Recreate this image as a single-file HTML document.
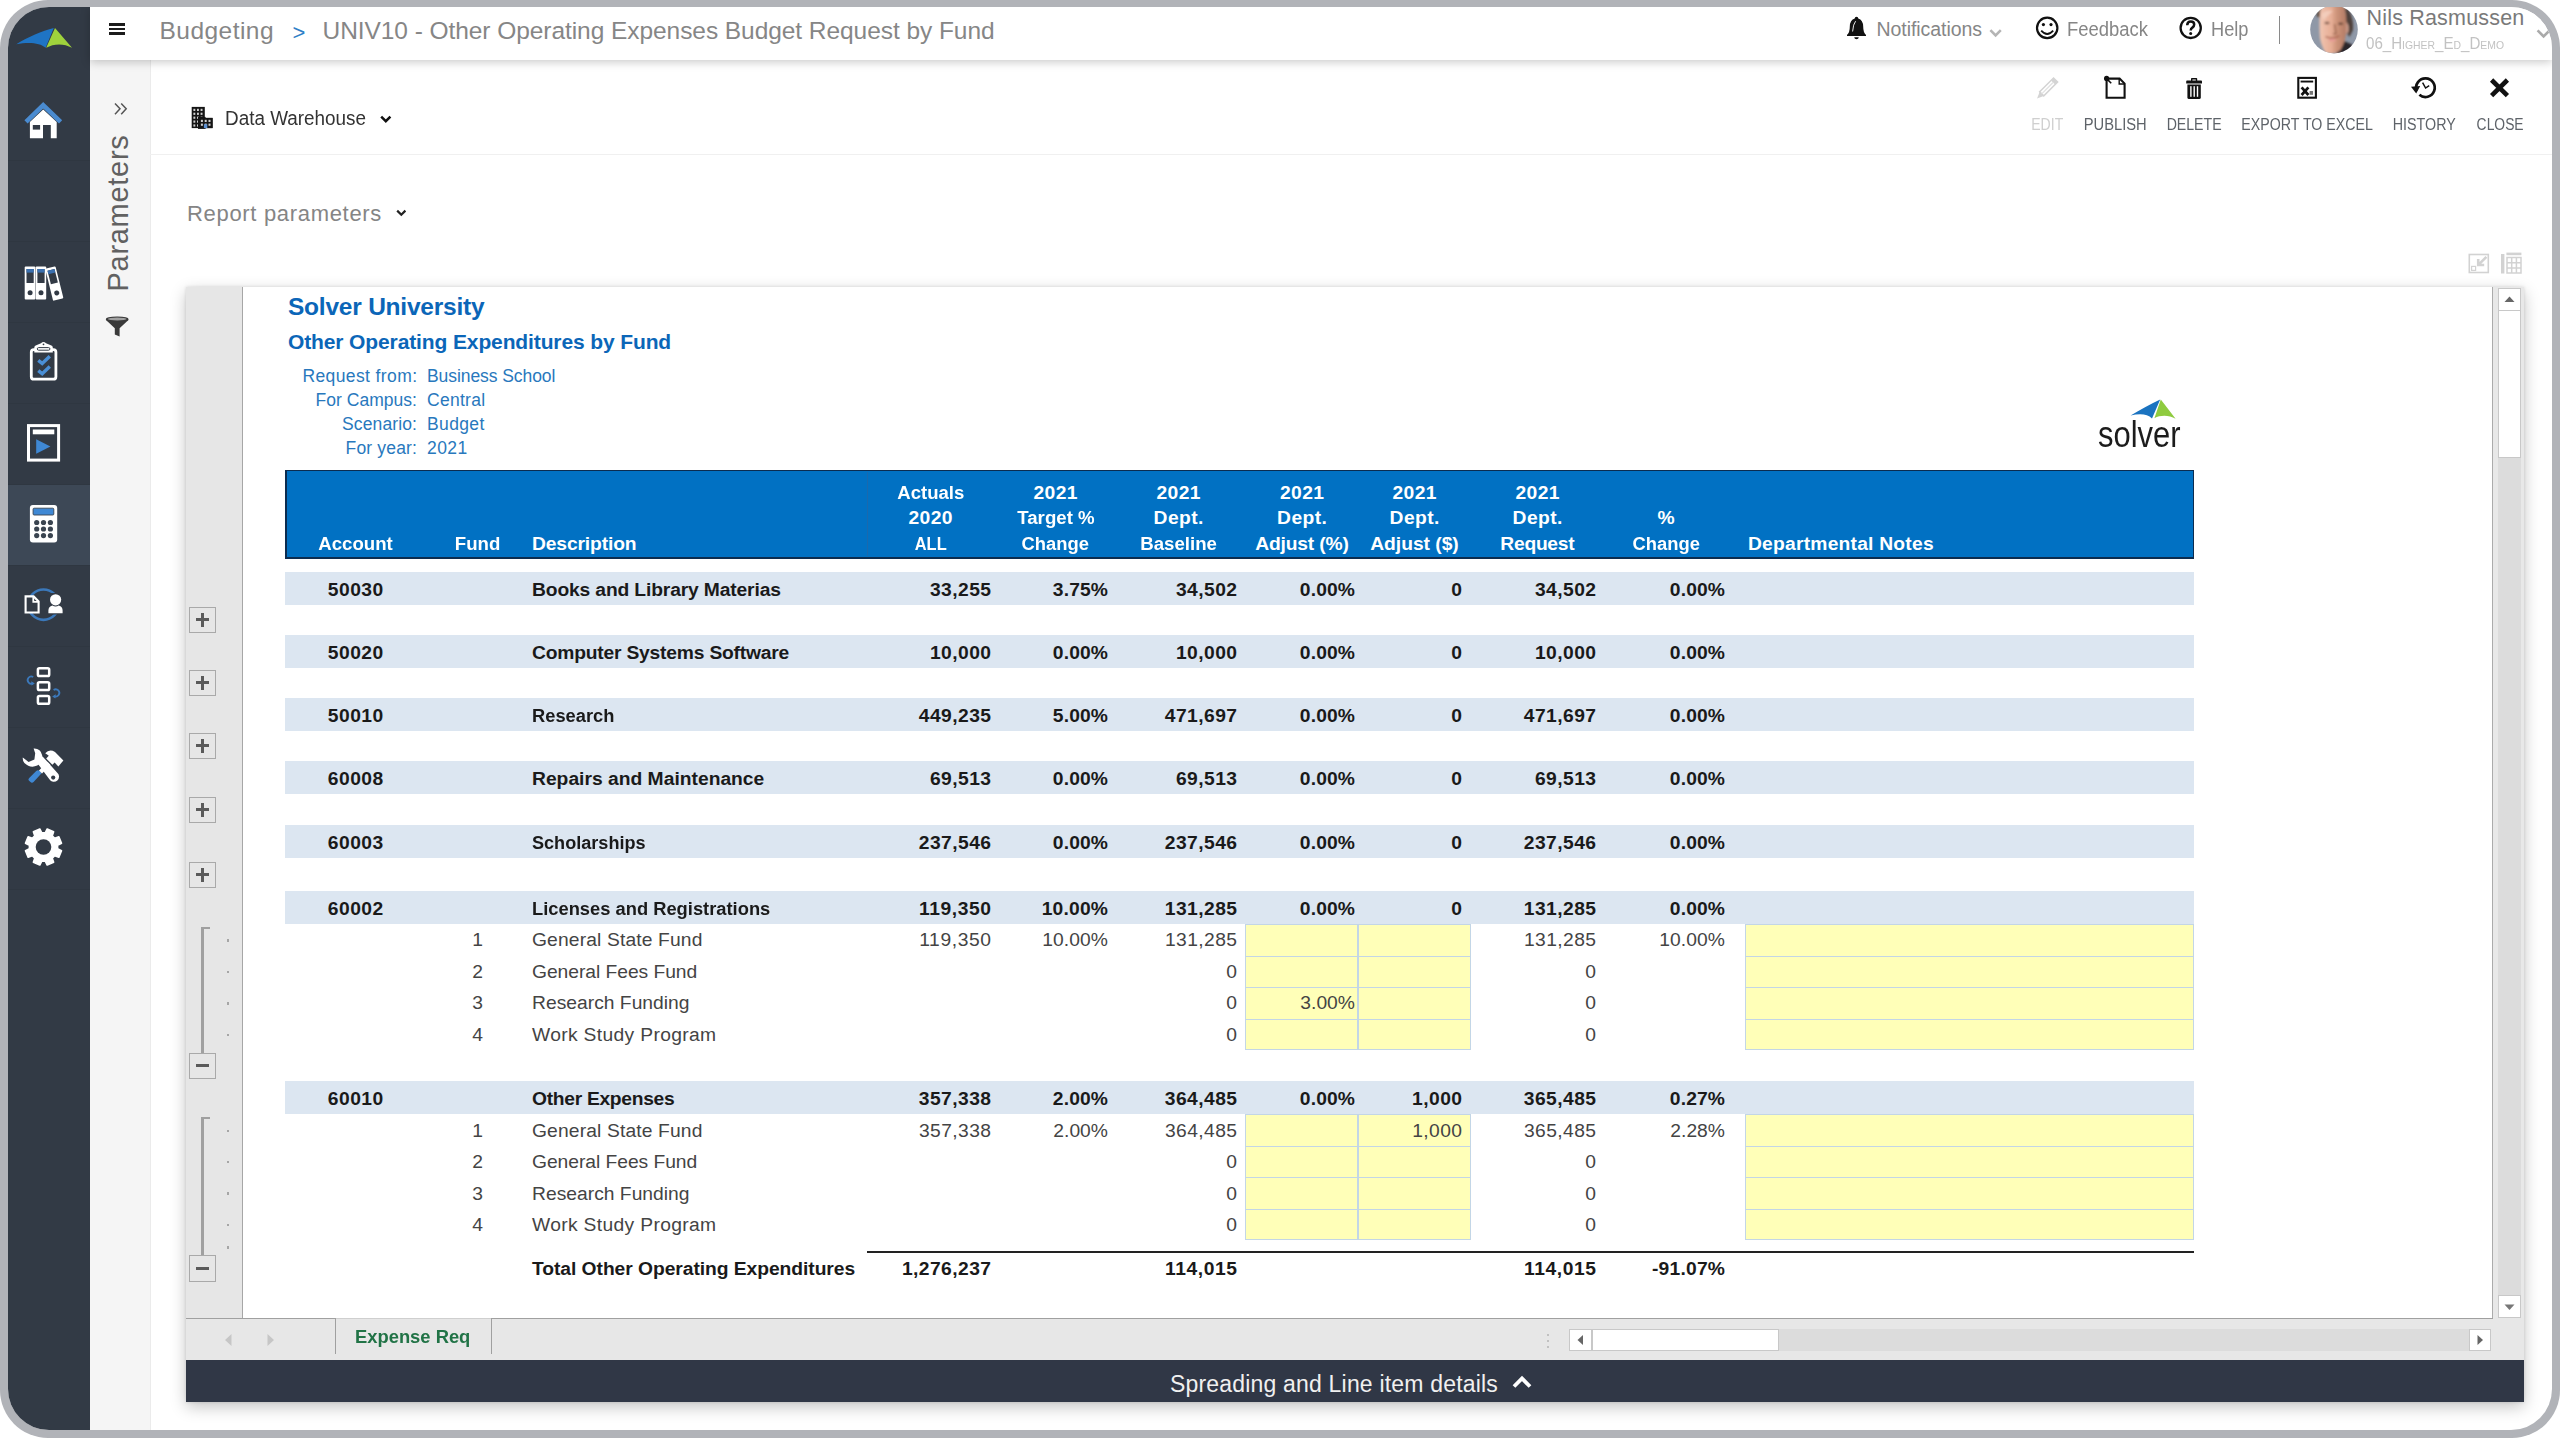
<!DOCTYPE html>
<html lang="en"><head><meta charset="utf-8"><title>UNIV10 - Other Operating Expenses Budget Request by Fund</title>
<style>
html,body{margin:0;padding:0;background:#fff;}
body{width:2560px;height:1438px;overflow:hidden;position:relative;font-family:"Liberation Sans",sans-serif;}
#frame{position:absolute;left:0;top:0;width:2560px;height:1438px;border-radius:48px;background:#b1b3b8;overflow:hidden;}
#app{position:absolute;left:7.5px;top:7px;width:2544.5px;height:1423px;border-radius:41px;background:#fff;overflow:hidden;}
/* everything inside #app is positioned in page coordinates via this shift */
#pg{position:absolute;left:-7.5px;top:-7px;width:2560px;height:1438px;}
.t{position:absolute;white-space:nowrap;font-family:"Liberation Sans",sans-serif;}
.b{position:absolute;}
svg{position:absolute;overflow:visible;}

</style></head><body>
<div id="frame"><div id="app"><div id="pg">
<div class="b" style="left:90px;top:60px;width:60px;height:1371px;background:#f5f5f5;border-right:1px solid #ebebeb;"></div>
<div class="b" style="left:150px;top:154px;width:2402px;height:1px;background:#f0f0f0;"></div>
<div class="b" style="left:7px;top:7px;width:83px;height:1424px;background:#323a45;"></div>
<div class="b" style="left:7px;top:484px;width:83px;height:81px;background:#3d4856;"></div>
<div class="b" style="left:8px;top:160px;width:82px;height:1px;background:#2f3741;"></div>
<div class="b" style="left:8px;top:241px;width:82px;height:1px;background:#2f3741;"></div>
<div class="b" style="left:8px;top:322px;width:82px;height:1px;background:#2f3741;"></div>
<div class="b" style="left:8px;top:403px;width:82px;height:1px;background:#2f3741;"></div>
<div class="b" style="left:8px;top:484px;width:82px;height:1px;background:#2f3741;"></div>
<div class="b" style="left:8px;top:565px;width:82px;height:1px;background:#2f3741;"></div>
<div class="b" style="left:8px;top:646px;width:82px;height:1px;background:#2f3741;"></div>
<div class="b" style="left:8px;top:727px;width:82px;height:1px;background:#2f3741;"></div>
<div class="b" style="left:8px;top:808px;width:82px;height:1px;background:#2f3741;"></div>
<div class="b" style="left:8px;top:889px;width:82px;height:1px;background:#2f3741;"></div>
<svg style="left:0;top:0" width="100" height="900" viewBox="0 0 100 900"><path d="M16.3 44.3 C28 37 42 31 53.8 28 L45.6 47.8 C40 42.5 28 42 16.3 44.3Z" fill="#1f74c4"/><path d="M55 28 L72 47.8 C64 43.3 54 43.3 46.2 47.8Z" fill="#9fd23c"/><path d="M29.9 122 L43.2 109.5 L56.7 122 V138.2 H50.8 V125 H43 V138.2 H29.9Z" fill="#fff"/><rect x="32.8" y="125" width="7.3" height="4.6" fill="#323a45"/><path d="M26 121.8 L43.2 105.3 L60.6 121.8" fill="none" stroke="#4a8bd0" stroke-width="4.6" stroke-linejoin="miter"/><g ><rect x="24.7" y="266.6" width="10.6" height="33" rx="1" fill="#fff"/><rect x="26.5" y="269" width="7.2" height="14" fill="#323a45"/><rect x="26.5" y="269" width="7.2" height="3.6" fill="#3a6fae"/><circle cx="30.1" cy="292.8" r="2.5" fill="#323a45"/></g><g ><rect x="35.6" y="266.6" width="10.6" height="33" rx="1" fill="#fff"/><rect x="37.4" y="269" width="7.2" height="14" fill="#323a45"/><rect x="37.4" y="269" width="7.2" height="3.6" fill="#3a6fae"/><circle cx="41.0" cy="292.8" r="2.5" fill="#323a45"/></g><g transform="rotate(-14 58.2 299.6) translate(5.4 0)"><rect x="47.6" y="266.6" width="10.6" height="33" rx="1" fill="#fff"/><rect x="49.4" y="269" width="7.2" height="14" fill="#323a45"/><rect x="49.4" y="269" width="7.2" height="3.6" fill="#3a6fae"/><circle cx="53.0" cy="292.8" r="2.5" fill="#323a45"/></g><rect x="31.3" y="349.6" width="24.6" height="29.6" rx="2.5" fill="none" stroke="#fff" stroke-width="2.8"/><path d="M34.3 352.4 V347.5 Q34.3 345.5 36.3 345.3 L41 343.3 Q43.5 340.8 46 343.3 L50.8 345.3 Q52.8 345.5 52.8 347.5 V352.4Z" fill="#fff"/><rect x="37.3" y="347.6" width="12.6" height="2.6" rx="1.3" fill="none" stroke="#323a45" stroke-width="1"/><circle cx="43.5" cy="344.3" r="0.9" fill="#323a45"/><path d="M38.3 360.3 L42.2 363.4 L49.8 356.2" fill="none" stroke="#4a8fd6" stroke-width="3.4"/><path d="M38.3 370.6 L42.2 373.7 L49.8 366.5" fill="none" stroke="#4a8fd6" stroke-width="3.4"/><rect x="28.5" y="425.6" width="30.1" height="34.5" fill="none" stroke="#fff" stroke-width="3"/><rect x="32.8" y="429.5" width="21.5" height="4.8" fill="#fff"/><path d="M36.2 439.2 V453.8 L50.4 446.5Z" fill="#3f88d4"/><rect x="29.9" y="505" width="27.3" height="37.4" rx="3" fill="#fff"/><rect x="33.1" y="508.2" width="20.7" height="6.8" rx="1" fill="#3f88d4" stroke="#3a4450" stroke-width="0.9"/><circle cx="36.7" cy="522.5" r="2.6" fill="#3a4450"/><circle cx="36.7" cy="529" r="2.6" fill="#3a4450"/><circle cx="36.7" cy="535.6" r="2.6" fill="#3a4450"/><circle cx="43.5" cy="522.5" r="2.6" fill="#3a4450"/><circle cx="43.5" cy="529" r="2.6" fill="#3a4450"/><circle cx="43.5" cy="535.6" r="2.6" fill="#3a4450"/><circle cx="50.4" cy="522.5" r="2.6" fill="#3a4450"/><circle cx="50.4" cy="529" r="2.6" fill="#3a4450"/><circle cx="50.4" cy="535.6" r="2.6" fill="#3a4450"/><circle cx="43.5" cy="604.7" r="15.2" fill="none" stroke="#3b78ba" stroke-width="2.6"/><path d="M25.6 596.4 H33.6 L38.6 601.4 V612.5 H25.6Z" fill="#323a45" stroke="#fff" stroke-width="2.1"/><path d="M33.3 596.4 V601.8 H38.6" fill="none" stroke="#fff" stroke-width="1.8"/><rect x="46" y="593" width="18" height="21.5" fill="#323a45"/><circle cx="55.6" cy="599.8" r="5.6" fill="#fff"/><path d="M48.4 613.2 V610.5 Q48.4 606.6 52.4 605.6 Q55.6 607.6 58.8 605.6 Q62.6 606.6 62.6 610.5 V613.2Z" fill="#fff"/><rect x="37.9" y="668.2" width="11.3" height="7.8" rx="1.6" fill="none" stroke="#fff" stroke-width="2.5"/><rect x="37.9" y="682.2" width="11.3" height="7.8" rx="1.6" fill="none" stroke="#fff" stroke-width="2.5"/><rect x="37.9" y="696" width="11.3" height="7.8" rx="1.6" fill="none" stroke="#fff" stroke-width="2.5"/><path d="M33.2 677 A3.6 3.6 0 1 0 33.4 683" fill="none" stroke="#3b78ba" stroke-width="1.8"/><path d="M31.2 681.2 L34.8 683.6 L31.6 685.6Z" fill="#3b78ba"/><path d="M53.6 690 A3.6 3.6 0 1 1 53.8 696" fill="none" stroke="#3b78ba" stroke-width="1.8"/><path d="M55.8 694.2 L52.2 696.6 L55.4 698.6Z" fill="#3b78ba"/><path d="M29.2 778 L36.2 771 Q38 769.6 39.6 771 L41.6 773.2 L33.8 781.8 Q32 783.6 30.2 781.8 L28.8 780.4 Q27.8 779.2 29.2 778Z" fill="#3f88d4"/><path d="M45.2 753.2 Q49.5 748.6 55 752 L63.4 760.4 L58.4 766.4 L54.6 762.4 L52.4 764.8 L46.2 758.6 L48.8 755.8 Q47.2 754.2 45.2 753.2Z" fill="#fff"/><path d="M47.4 761.8 L50.4 764.8 L42 773.4 L39 770.4Z" fill="#fff"/><path d="M36.2 761.6 L42.6 756.4 L57 772.4 A5.2 5.2 0 1 1 49.4 779.2Z" fill="#fff"/><circle cx="53.2" cy="777.6" r="2.1" fill="#323a45"/><path d="M33.6 748.6 Q40.6 748.2 42.2 755.4 Q43.4 762.6 37.2 765.6 Q30.2 768.6 24.4 763 Q22.4 760.6 22.8 757.6 L28.6 762 L34.4 759.4 L35.2 753.2Z" fill="#fff"/><path d="M45.24 832.91 L47.20 828.98 L53.63 831.64 L52.24 835.81 L54.69 838.26 L58.86 836.87 L61.52 843.30 L57.59 845.26 L57.59 848.74 L61.52 850.70 L58.86 857.13 L54.69 855.74 L52.24 858.19 L53.63 862.36 L47.20 865.02 L45.24 861.09 L41.76 861.09 L39.80 865.02 L33.37 862.36 L34.76 858.19 L32.31 855.74 L28.14 857.13 L25.48 850.70 L29.41 848.74 L29.41 845.26 L25.48 843.30 L28.14 836.87 L32.31 838.26 L34.76 835.81 L33.37 831.64 L39.80 828.98 L41.76 832.91Z" fill="#fff" stroke="#fff" stroke-width="1.6" stroke-linejoin="round"/><circle cx="43.5" cy="847.0" r="7.8" fill="#323a45"/></svg>
<div class="t" style="font-size:29px;color:#616161;letter-spacing:0.711px;left:0.00px;top:-19.00px;line-height:38px;left:118px;top:213px;transform:translate(-50%,-50%) rotate(-90deg);">Parameters</div>
<svg style="left:0;top:0" width="2560" height="400" viewBox="0 0 2560 400"><path d="M115 103.4 L120 108.8 L115 114.2 M121.2 103.4 L126.2 108.8 L121.2 114.2" fill="none" stroke="#555" stroke-width="1.5"/><path d="M105.8 319.2 Q105.8 316.4 117.2 316.4 Q128.6 316.4 128.6 319.2 Q128.6 320.6 126.8 321.6 L119.6 328.2 V336.4 L114.8 334.6 V328.2 L107.6 321.6 Q105.8 320.6 105.8 319.2Z" fill="#3a3a3a"/><ellipse cx="117.2" cy="319" rx="9.4" ry="1.5" fill="#f5f5f5" opacity=".55"/><rect x="191.7" y="106.9" width="13.1" height="21.2" fill="#151515"/><rect x="199" y="117.9" width="13.6" height="10.2" fill="#151515"/><rect x="193.4" y="108.8" width="1.9" height="2.2" fill="#cfcfcf"/><rect x="197.0" y="108.8" width="1.9" height="2.2" fill="#cfcfcf"/><rect x="200.6" y="108.8" width="1.9" height="2.2" fill="#cfcfcf"/><rect x="193.4" y="112.7" width="1.9" height="2.2" fill="#cfcfcf"/><rect x="197.0" y="112.7" width="1.9" height="2.2" fill="#cfcfcf"/><rect x="200.6" y="112.7" width="1.9" height="2.2" fill="#cfcfcf"/><rect x="193.4" y="116.6" width="1.9" height="2.2" fill="#cfcfcf"/><rect x="197.0" y="116.6" width="1.9" height="2.2" fill="#cfcfcf"/><rect x="200.6" y="116.6" width="1.9" height="2.2" fill="#cfcfcf"/><rect x="193.4" y="120.5" width="1.9" height="2.2" fill="#cfcfcf"/><rect x="197.0" y="120.5" width="1.9" height="2.2" fill="#cfcfcf"/><rect x="200.6" y="120.5" width="1.9" height="2.2" fill="#cfcfcf"/><rect x="193.4" y="124.4" width="1.9" height="2.2" fill="#cfcfcf"/><rect x="197.0" y="124.4" width="1.9" height="2.2" fill="#cfcfcf"/><rect x="200.6" y="124.4" width="1.9" height="2.2" fill="#cfcfcf"/><rect x="198" y="116.9" width="7.6" height="12" fill="#151515"/><rect x="199" y="117.9" width="13.6" height="10.2" fill="#151515"/><rect x="200.9" y="119.8" width="2" height="2.2" fill="#cfcfcf"/><rect x="204.7" y="119.8" width="2" height="2.2" fill="#cfcfcf"/><rect x="208.5" y="119.8" width="2" height="2.2" fill="#cfcfcf"/><rect x="200.9" y="123.6" width="2" height="2.2" fill="#cfcfcf"/><rect x="204.7" y="123.6" width="2" height="2.2" fill="#cfcfcf"/><rect x="208.5" y="123.6" width="2" height="2.2" fill="#cfcfcf"/><rect x="203.9" y="124.2" width="3.4" height="3.9" fill="#5b8fd0"/><path d="M381.2 116.6 L385.8 121.2 L390.4 116.6" fill="none" stroke="#111" stroke-width="2.5"/><path d="M397.2 210.6 L401.3 214.7 L405.4 210.6" fill="none" stroke="#222" stroke-width="2.2"/><rect x="2469.3" y="254.5" width="19" height="18" fill="none" stroke="#d2d2d2" stroke-width="1.6"/><rect x="2471.6" y="266.4" width="4" height="4" fill="none" stroke="#d2d2d2" stroke-width="1.2"/><path d="M2478.6 264.6 L2486.4 256.8 M2478.2 259 V265 H2484.2" fill="none" stroke="#d2d2d2" stroke-width="2.6"/><rect x="2501" y="254" width="3.4" height="19.5" fill="#d2d2d2"/><rect x="2506.4" y="252.6" width="15" height="2.6" fill="#d2d2d2"/><path d="M2507 257.6 H2521 V273 H2507Z M2507 262.8 H2521 M2507 267.9 H2521 M2511.7 257.6 V273 M2516.4 257.6 V273" fill="none" stroke="#d2d2d2" stroke-width="1.5"/></svg>
<div class="t" style="font-size:19.5px;color:#333;transform:scaleX(0.9683);transform-origin:left center;left:225.00px;top:105.50px;line-height:25px;">Data Warehouse</div>
<div class="t" style="font-size:22px;color:#858585;letter-spacing:0.681px;left:187.00px;top:198.50px;line-height:29px;">Report parameters</div>
<div class="t" style="font-size:16px;color:#cfcfcf;transform:scaleX(0.8778);transform-origin:center center;left:2029.27px;top:113.50px;line-height:21px;">EDIT</div>
<div class="t" style="font-size:16px;color:#5e6369;transform:scaleX(0.9201);transform-origin:center center;left:2080.77px;top:113.50px;line-height:21px;">PUBLISH</div>
<div class="t" style="font-size:16px;color:#5e6369;transform:scaleX(0.8835);transform-origin:center center;left:2163.38px;top:113.50px;line-height:21px;">DELETE</div>
<div class="t" style="font-size:16px;color:#5e6369;transform:scaleX(0.8872);transform-origin:center center;left:2232.89px;top:113.50px;line-height:21px;">EXPORT TO EXCEL</div>
<div class="t" style="font-size:16px;color:#5e6369;transform:scaleX(0.8930);transform-origin:center center;left:2389.23px;top:113.50px;line-height:21px;">HISTORY</div>
<div class="t" style="font-size:16px;color:#5e6369;transform:scaleX(0.8664);transform-origin:center center;left:2472.88px;top:113.50px;line-height:21px;">CLOSE</div>
<div class="b" style="left:186px;top:287px;width:2338px;height:1115px;background:#fff;box-shadow:0 5px 15px rgba(0,0,0,.23),0 0 3px rgba(0,0,0,.12);"></div>
<div class="b" style="left:186px;top:287px;width:56px;height:1032px;background:#e6e6e6;border-right:1px solid #a6a6a6;"></div>
<div class="b" style="left:2492px;top:287px;width:32px;height:1032px;background:#e8e8e8;border-left:1px solid #ababab;box-sizing:border-box;"></div>
<div class="b" style="left:2498px;top:311px;width:23px;height:985px;background:#dcdcdc;"></div>
<div class="b" style="left:2498px;top:288px;width:23px;height:23px;background:#fff;box-sizing:border-box;border:1px solid #c8c8c8;"></div>
<div class="b" style="left:2498px;top:310px;width:23px;height:148px;background:#fff;box-sizing:border-box;border:1px solid #c8c8c8;"></div>
<div class="b" style="left:2498px;top:1295px;width:23px;height:23px;background:#fff;box-sizing:border-box;border:1px solid #c8c8c8;"></div>
<svg style="left:2498px;top:288px" width="23" height="23"><path d="M6.5 14 L11.5 8.5 L16.5 14Z" fill="#666"/></svg>
<svg style="left:2498px;top:1295px" width="23" height="23"><path d="M6.5 9.5 L11.5 15 L16.5 9.5Z" fill="#777"/></svg>
<div class="b" style="left:186px;top:1318px;width:2338px;height:42px;background:#e7e7e7;"></div>
<div class="b" style="left:186px;top:1318px;width:150px;height:1px;background:#a0a0a0;"></div>
<div class="b" style="left:491px;top:1318px;width:2002px;height:1px;background:#a0a0a0;"></div>
<div class="b" style="left:335px;top:1318px;width:156px;height:1px;background:#cfcfcf;"></div>
<div class="b" style="left:335px;top:1318px;width:1px;height:36px;background:#a0a0a0;"></div>
<div class="b" style="left:491px;top:1318px;width:1px;height:36px;background:#a0a0a0;"></div>
<svg style="left:224px;top:1332px" width="60" height="16"><path d="M7.5 2 L1 8 L7.5 14Z M43.5 2 L50 8 L43.5 14Z" fill="#c6c6c6"/></svg>
<div class="t" style="font-size:19.25px;color:#217346;font-weight:bold;transform:scaleX(0.9539);transform-origin:left center;left:355.00px;top:1324.00px;line-height:25px;">Expense Req</div>
<div class="b" style="left:1569px;top:1329px;width:922px;height:22px;background:#dcdcdc;"></div>
<div class="b" style="left:1569px;top:1329px;width:23px;height:22px;background:#fff;box-sizing:border-box;border:1px solid #c8c8c8;"></div>
<div class="b" style="left:1592px;top:1329px;width:187px;height:22px;background:#fff;box-sizing:border-box;border:1px solid #c8c8c8;"></div>
<div class="b" style="left:2469px;top:1329px;width:22px;height:22px;background:#fff;box-sizing:border-box;border:1px solid #c8c8c8;"></div>
<svg style="left:1569px;top:1329px" width="23" height="22"><path d="M14 6 L8.5 11 L14 16Z" fill="#666"/></svg>
<svg style="left:2469px;top:1329px" width="22" height="22"><path d="M8.5 6 L14 11 L8.5 16Z" fill="#666"/></svg>
<div class="b" style="left:1546.8px;top:1333.7px;width:2.6px;height:2.6px;background:#b4b4b4;border-radius:1.3px;"></div>
<div class="b" style="left:1546.8px;top:1339.7px;width:2.6px;height:2.6px;background:#b4b4b4;border-radius:1.3px;"></div>
<div class="b" style="left:1546.8px;top:1345.7px;width:2.6px;height:2.6px;background:#b4b4b4;border-radius:1.3px;"></div>
<div class="b" style="left:186px;top:1360px;width:2338px;height:42px;background:#303746;"></div>
<div class="t" style="font-size:23px;color:#f0f0f0;letter-spacing:0.186px;left:1170.00px;top:1368.60px;line-height:30px;">Spreading and Line item details</div>
<svg style="left:1512px;top:1374px" width="20" height="14"><path d="M2 12.5 L10 4.5 L18 12.5" fill="none" stroke="#fff" stroke-width="3.8"/></svg>
<div class="b" style="left:189px;top:606.6px;width:26.8px;height:26.8px;background:#e6e6e6;box-sizing:border-box;border:1.5px solid #a9a9a9;"></div>
<div class="b" style="left:195.6px;top:618.4px;width:13.6px;height:3px;background:#5a5a5a;"></div>
<div class="b" style="left:200.9px;top:613.1px;width:3px;height:13.6px;background:#5a5a5a;"></div>
<div class="b" style="left:189px;top:669.6px;width:26.8px;height:26.8px;background:#e6e6e6;box-sizing:border-box;border:1.5px solid #a9a9a9;"></div>
<div class="b" style="left:195.6px;top:681.4px;width:13.6px;height:3px;background:#5a5a5a;"></div>
<div class="b" style="left:200.9px;top:676.1px;width:3px;height:13.6px;background:#5a5a5a;"></div>
<div class="b" style="left:189px;top:732.6px;width:26.8px;height:26.8px;background:#e6e6e6;box-sizing:border-box;border:1.5px solid #a9a9a9;"></div>
<div class="b" style="left:195.6px;top:744.4px;width:13.6px;height:3px;background:#5a5a5a;"></div>
<div class="b" style="left:200.9px;top:739.1px;width:3px;height:13.6px;background:#5a5a5a;"></div>
<div class="b" style="left:189px;top:796.6px;width:26.8px;height:26.8px;background:#e6e6e6;box-sizing:border-box;border:1.5px solid #a9a9a9;"></div>
<div class="b" style="left:195.6px;top:808.4px;width:13.6px;height:3px;background:#5a5a5a;"></div>
<div class="b" style="left:200.9px;top:803.1px;width:3px;height:13.6px;background:#5a5a5a;"></div>
<div class="b" style="left:189px;top:861.6px;width:26.8px;height:26.8px;background:#e6e6e6;box-sizing:border-box;border:1.5px solid #a9a9a9;"></div>
<div class="b" style="left:195.6px;top:873.4px;width:13.6px;height:3px;background:#5a5a5a;"></div>
<div class="b" style="left:200.9px;top:868.1px;width:3px;height:13.6px;background:#5a5a5a;"></div>
<div class="b" style="left:201.2px;top:927px;width:2.4px;height:127px;background:#a0a0a0;"></div>
<div class="b" style="left:201.2px;top:927px;width:8.4px;height:2.2px;background:#a0a0a0;"></div>
<div class="b" style="left:226.8px;top:939.3px;width:2.5px;height:2.5px;background:#a6a6a6;"></div>
<div class="b" style="left:226.8px;top:970.8px;width:2.5px;height:2.5px;background:#a6a6a6;"></div>
<div class="b" style="left:226.8px;top:1002.3px;width:2.5px;height:2.5px;background:#a6a6a6;"></div>
<div class="b" style="left:226.8px;top:1033.8px;width:2.5px;height:2.5px;background:#a6a6a6;"></div>
<div class="b" style="left:201.2px;top:1117px;width:2.4px;height:139px;background:#a0a0a0;"></div>
<div class="b" style="left:201.2px;top:1117px;width:8.4px;height:2.2px;background:#a0a0a0;"></div>
<div class="b" style="left:226.8px;top:1129.8px;width:2.5px;height:2.5px;background:#a6a6a6;"></div>
<div class="b" style="left:226.8px;top:1160.8px;width:2.5px;height:2.5px;background:#a6a6a6;"></div>
<div class="b" style="left:226.8px;top:1192.3px;width:2.5px;height:2.5px;background:#a6a6a6;"></div>
<div class="b" style="left:226.8px;top:1223.8px;width:2.5px;height:2.5px;background:#a6a6a6;"></div>
<div class="b" style="left:226.8px;top:1246.3px;width:2.5px;height:2.5px;background:#a6a6a6;"></div>
<div class="b" style="left:189px;top:1052.6px;width:26.8px;height:26.8px;background:#e6e6e6;box-sizing:border-box;border:1.5px solid #a9a9a9;"></div>
<div class="b" style="left:195.6px;top:1064.4px;width:13.6px;height:3px;background:#5a5a5a;"></div>
<div class="b" style="left:189px;top:1255.1px;width:26.8px;height:26.8px;background:#e6e6e6;box-sizing:border-box;border:1.5px solid #a9a9a9;"></div>
<div class="b" style="left:195.6px;top:1266.9px;width:13.6px;height:3px;background:#5a5a5a;"></div>
<div class="t" style="font-size:24.5px;color:#0b66b8;font-weight:bold;letter-spacing:-0.222px;left:288.00px;top:291.40px;line-height:32px;">Solver University</div>
<div class="t" style="font-size:21.0px;color:#0b66b8;font-weight:bold;letter-spacing:-0.120px;left:288.00px;top:327.50px;line-height:27px;">Other Operating Expenditures by Fund</div>
<div class="t" style="font-size:17.5px;color:#2878bd;letter-spacing:0.386px;left:302.46px;top:364.90px;line-height:23px;">Request from:</div>
<div class="t" style="font-size:17.5px;color:#2878bd;letter-spacing:-0.073px;left:427.00px;top:364.90px;line-height:23px;">Business School</div>
<div class="t" style="font-size:17.5px;color:#2878bd;letter-spacing:0.024px;left:315.62px;top:388.90px;line-height:23px;">For Campus:</div>
<div class="t" style="font-size:17.5px;color:#2878bd;letter-spacing:0.281px;left:427.00px;top:388.90px;line-height:23px;">Central</div>
<div class="t" style="font-size:17.5px;color:#2878bd;letter-spacing:0.135px;left:341.98px;top:412.90px;line-height:23px;">Scenario:</div>
<div class="t" style="font-size:17.5px;color:#2878bd;letter-spacing:0.372px;left:427.00px;top:412.90px;line-height:23px;">Budget</div>
<div class="t" style="font-size:17.5px;color:#2878bd;letter-spacing:0.175px;left:345.57px;top:436.90px;line-height:23px;">For year:</div>
<div class="t" style="font-size:17.5px;color:#2878bd;letter-spacing:0.406px;left:427.00px;top:436.90px;line-height:23px;">2021</div>
<svg style="left:0;top:0" width="2560" height="460" viewBox="0 0 2560 460"><path d="M2130.6 415.4 C2140 410 2151 403.6 2160.2 399.5 L2152 418.4 C2147.5 413.8 2140 413.6 2130.6 415.4Z" fill="#1a73c0"/><path d="M2160.8 399.5 L2175.6 418.8 C2169 415 2160.5 415 2154.4 418.2Z" fill="#8fcb3f"/></svg>
<div class="t" style="font-size:36px;color:#1c1c1c;transform:scaleX(0.8591);transform-origin:left center;left:2097.50px;top:411.00px;line-height:47px;">solver</div>
<div class="b" style="left:285px;top:470px;width:1909px;height:88.6px;background:#0171c3;box-sizing:border-box;border:solid #0b2c50;border-width:1.6px 1.4px 2px 2px;"></div>
<div class="b" style="left:867px;top:472px;width:1px;height:84px;background:#1a69ad;"></div>
<div class="t" style="font-size:19.25px;color:#fff;font-weight:bold;transform:scaleX(0.9675);transform-origin:center center;left:316.50px;top:530.50px;line-height:25px;">Account</div>
<div class="t" style="font-size:19.25px;color:#fff;font-weight:bold;transform:scaleX(0.9678);transform-origin:center center;left:453.98px;top:530.50px;line-height:25px;">Fund</div>
<div class="t" style="font-size:19.25px;color:#fff;font-weight:bold;letter-spacing:-0.135px;left:532.00px;top:530.50px;line-height:25px;">Description</div>
<div class="t" style="font-size:19.25px;color:#fff;font-weight:bold;transform:scaleX(0.9636);transform-origin:center center;left:895.73px;top:479.50px;line-height:25px;">Actuals</div>
<div class="t" style="font-size:19.25px;color:#fff;font-weight:bold;letter-spacing:0.449px;left:908.41px;top:505.00px;line-height:25px;">2020</div>
<div class="t" style="font-size:19.25px;color:#fff;font-weight:bold;transform:scaleX(0.8530);transform-origin:center center;left:911.79px;top:530.50px;line-height:25px;">ALL</div>
<div class="t" style="font-size:19.25px;color:#fff;font-weight:bold;letter-spacing:0.449px;left:1033.41px;top:479.50px;line-height:25px;">2021</div>
<div class="t" style="font-size:19.25px;color:#fff;font-weight:bold;transform:scaleX(0.9691);transform-origin:center center;left:1015.56px;top:505.00px;line-height:25px;">Target %</div>
<div class="t" style="font-size:19.25px;color:#fff;font-weight:bold;transform:scaleX(0.9548);transform-origin:center center;left:1020.20px;top:530.50px;line-height:25px;">Change</div>
<div class="t" style="font-size:19.25px;color:#fff;font-weight:bold;letter-spacing:0.449px;left:1156.41px;top:479.50px;line-height:25px;">2021</div>
<div class="t" style="font-size:19.25px;color:#fff;font-weight:bold;letter-spacing:0.412px;left:1153.61px;top:505.00px;line-height:25px;">Dept.</div>
<div class="t" style="font-size:19.25px;color:#fff;font-weight:bold;transform:scaleX(0.9692);transform-origin:center center;left:1138.91px;top:530.50px;line-height:25px;">Baseline</div>
<div class="t" style="font-size:19.25px;color:#fff;font-weight:bold;letter-spacing:0.449px;left:1279.91px;top:479.50px;line-height:25px;">2021</div>
<div class="t" style="font-size:19.25px;color:#fff;font-weight:bold;letter-spacing:0.412px;left:1277.11px;top:505.00px;line-height:25px;">Dept.</div>
<div class="t" style="font-size:19.25px;color:#fff;font-weight:bold;letter-spacing:-0.172px;left:1255.19px;top:530.50px;line-height:25px;">Adjust (%)</div>
<div class="t" style="font-size:19.25px;color:#fff;font-weight:bold;letter-spacing:0.449px;left:1392.41px;top:479.50px;line-height:25px;">2021</div>
<div class="t" style="font-size:19.25px;color:#fff;font-weight:bold;letter-spacing:0.412px;left:1389.61px;top:505.00px;line-height:25px;">Dept.</div>
<div class="t" style="font-size:19.25px;color:#fff;font-weight:bold;letter-spacing:-0.019px;left:1370.20px;top:530.50px;line-height:25px;">Adjust ($)</div>
<div class="t" style="font-size:19.25px;color:#fff;font-weight:bold;letter-spacing:0.449px;left:1515.41px;top:479.50px;line-height:25px;">2021</div>
<div class="t" style="font-size:19.25px;color:#fff;font-weight:bold;letter-spacing:0.412px;left:1512.61px;top:505.00px;line-height:25px;">Dept.</div>
<div class="t" style="font-size:19.25px;color:#fff;font-weight:bold;letter-spacing:-0.279px;left:1500.36px;top:530.50px;line-height:25px;">Request</div>
<div class="t" style="font-size:19.25px;color:#fff;font-weight:bold;left:1657.44px;top:505.00px;line-height:25px;">%</div>
<div class="t" style="font-size:19.25px;color:#fff;font-weight:bold;transform:scaleX(0.9548);transform-origin:center center;left:1630.70px;top:530.50px;line-height:25px;">Change</div>
<div class="t" style="font-size:19.25px;color:#fff;font-weight:bold;letter-spacing:0.220px;left:1748.00px;top:530.50px;line-height:25px;">Departmental Notes</div>
<div class="b" style="left:285px;top:572.4px;width:1909px;height:32.8px;background:#dce6f1;"></div>
<div class="t" style="font-size:19.25px;color:#1a1a1a;font-weight:bold;letter-spacing:0.450px;left:327.83px;top:576.50px;line-height:25px;">50030</div>
<div class="t" style="font-size:19.25px;color:#1a1a1a;font-weight:bold;letter-spacing:-0.141px;left:532.00px;top:576.50px;line-height:25px;">Books and Library Materias</div>
<div class="t" style="font-size:19.25px;color:#1a1a1a;font-weight:bold;letter-spacing:0.427px;left:929.97px;top:576.50px;line-height:25px;">33,255</div>
<div class="t" style="font-size:19.25px;color:#1a1a1a;font-weight:bold;letter-spacing:0.156px;left:1052.78px;top:576.50px;line-height:25px;">3.75%</div>
<div class="t" style="font-size:19.25px;color:#1a1a1a;font-weight:bold;letter-spacing:0.427px;left:1175.97px;top:576.50px;line-height:25px;">34,502</div>
<div class="t" style="font-size:19.25px;color:#1a1a1a;font-weight:bold;letter-spacing:0.156px;left:1299.78px;top:576.50px;line-height:25px;">0.00%</div>
<div class="t" style="font-size:19.25px;color:#1a1a1a;font-weight:bold;left:1451.28px;top:576.50px;line-height:25px;">0</div>
<div class="t" style="font-size:19.25px;color:#1a1a1a;font-weight:bold;letter-spacing:0.427px;left:1534.97px;top:576.50px;line-height:25px;">34,502</div>
<div class="t" style="font-size:19.25px;color:#1a1a1a;font-weight:bold;letter-spacing:0.156px;left:1669.78px;top:576.50px;line-height:25px;">0.00%</div>
<div class="b" style="left:285px;top:635.4px;width:1909px;height:32.8px;background:#dce6f1;"></div>
<div class="t" style="font-size:19.25px;color:#1a1a1a;font-weight:bold;letter-spacing:0.450px;left:327.83px;top:639.50px;line-height:25px;">50020</div>
<div class="t" style="font-size:19.25px;color:#1a1a1a;font-weight:bold;letter-spacing:-0.200px;left:532.00px;top:639.50px;line-height:25px;">Computer Systems Software</div>
<div class="t" style="font-size:19.25px;color:#1a1a1a;font-weight:bold;letter-spacing:0.427px;left:929.97px;top:639.50px;line-height:25px;">10,000</div>
<div class="t" style="font-size:19.25px;color:#1a1a1a;font-weight:bold;letter-spacing:0.156px;left:1052.78px;top:639.50px;line-height:25px;">0.00%</div>
<div class="t" style="font-size:19.25px;color:#1a1a1a;font-weight:bold;letter-spacing:0.427px;left:1175.97px;top:639.50px;line-height:25px;">10,000</div>
<div class="t" style="font-size:19.25px;color:#1a1a1a;font-weight:bold;letter-spacing:0.156px;left:1299.78px;top:639.50px;line-height:25px;">0.00%</div>
<div class="t" style="font-size:19.25px;color:#1a1a1a;font-weight:bold;left:1451.28px;top:639.50px;line-height:25px;">0</div>
<div class="t" style="font-size:19.25px;color:#1a1a1a;font-weight:bold;letter-spacing:0.427px;left:1534.97px;top:639.50px;line-height:25px;">10,000</div>
<div class="t" style="font-size:19.25px;color:#1a1a1a;font-weight:bold;letter-spacing:0.156px;left:1669.78px;top:639.50px;line-height:25px;">0.00%</div>
<div class="b" style="left:285px;top:698.4px;width:1909px;height:32.8px;background:#dce6f1;"></div>
<div class="t" style="font-size:19.25px;color:#1a1a1a;font-weight:bold;letter-spacing:0.450px;left:327.83px;top:702.50px;line-height:25px;">50010</div>
<div class="t" style="font-size:19.25px;color:#1a1a1a;font-weight:bold;transform:scaleX(0.9504);transform-origin:left center;left:532.00px;top:702.50px;line-height:25px;">Research</div>
<div class="t" style="font-size:19.25px;color:#1a1a1a;font-weight:bold;letter-spacing:0.431px;left:918.82px;top:702.50px;line-height:25px;">449,235</div>
<div class="t" style="font-size:19.25px;color:#1a1a1a;font-weight:bold;letter-spacing:0.156px;left:1052.78px;top:702.50px;line-height:25px;">5.00%</div>
<div class="t" style="font-size:19.25px;color:#1a1a1a;font-weight:bold;letter-spacing:0.431px;left:1164.82px;top:702.50px;line-height:25px;">471,697</div>
<div class="t" style="font-size:19.25px;color:#1a1a1a;font-weight:bold;letter-spacing:0.156px;left:1299.78px;top:702.50px;line-height:25px;">0.00%</div>
<div class="t" style="font-size:19.25px;color:#1a1a1a;font-weight:bold;left:1451.28px;top:702.50px;line-height:25px;">0</div>
<div class="t" style="font-size:19.25px;color:#1a1a1a;font-weight:bold;letter-spacing:0.431px;left:1523.82px;top:702.50px;line-height:25px;">471,697</div>
<div class="t" style="font-size:19.25px;color:#1a1a1a;font-weight:bold;letter-spacing:0.156px;left:1669.78px;top:702.50px;line-height:25px;">0.00%</div>
<div class="b" style="left:285px;top:761.4px;width:1909px;height:32.8px;background:#dce6f1;"></div>
<div class="t" style="font-size:19.25px;color:#1a1a1a;font-weight:bold;letter-spacing:0.450px;left:327.83px;top:765.50px;line-height:25px;">60008</div>
<div class="t" style="font-size:19.25px;color:#1a1a1a;font-weight:bold;letter-spacing:0.007px;left:532.00px;top:765.50px;line-height:25px;">Repairs and Maintenance</div>
<div class="t" style="font-size:19.25px;color:#1a1a1a;font-weight:bold;letter-spacing:0.427px;left:929.97px;top:765.50px;line-height:25px;">69,513</div>
<div class="t" style="font-size:19.25px;color:#1a1a1a;font-weight:bold;letter-spacing:0.156px;left:1052.78px;top:765.50px;line-height:25px;">0.00%</div>
<div class="t" style="font-size:19.25px;color:#1a1a1a;font-weight:bold;letter-spacing:0.427px;left:1175.97px;top:765.50px;line-height:25px;">69,513</div>
<div class="t" style="font-size:19.25px;color:#1a1a1a;font-weight:bold;letter-spacing:0.156px;left:1299.78px;top:765.50px;line-height:25px;">0.00%</div>
<div class="t" style="font-size:19.25px;color:#1a1a1a;font-weight:bold;left:1451.28px;top:765.50px;line-height:25px;">0</div>
<div class="t" style="font-size:19.25px;color:#1a1a1a;font-weight:bold;letter-spacing:0.427px;left:1534.97px;top:765.50px;line-height:25px;">69,513</div>
<div class="t" style="font-size:19.25px;color:#1a1a1a;font-weight:bold;letter-spacing:0.156px;left:1669.78px;top:765.50px;line-height:25px;">0.00%</div>
<div class="b" style="left:285px;top:825.4px;width:1909px;height:32.8px;background:#dce6f1;"></div>
<div class="t" style="font-size:19.25px;color:#1a1a1a;font-weight:bold;letter-spacing:0.450px;left:327.83px;top:829.50px;line-height:25px;">60003</div>
<div class="t" style="font-size:19.25px;color:#1a1a1a;font-weight:bold;transform:scaleX(0.9394);transform-origin:left center;left:532.00px;top:829.50px;line-height:25px;">Scholarships</div>
<div class="t" style="font-size:19.25px;color:#1a1a1a;font-weight:bold;letter-spacing:0.431px;left:918.82px;top:829.50px;line-height:25px;">237,546</div>
<div class="t" style="font-size:19.25px;color:#1a1a1a;font-weight:bold;letter-spacing:0.156px;left:1052.78px;top:829.50px;line-height:25px;">0.00%</div>
<div class="t" style="font-size:19.25px;color:#1a1a1a;font-weight:bold;letter-spacing:0.431px;left:1164.82px;top:829.50px;line-height:25px;">237,546</div>
<div class="t" style="font-size:19.25px;color:#1a1a1a;font-weight:bold;letter-spacing:0.156px;left:1299.78px;top:829.50px;line-height:25px;">0.00%</div>
<div class="t" style="font-size:19.25px;color:#1a1a1a;font-weight:bold;left:1451.28px;top:829.50px;line-height:25px;">0</div>
<div class="t" style="font-size:19.25px;color:#1a1a1a;font-weight:bold;letter-spacing:0.431px;left:1523.82px;top:829.50px;line-height:25px;">237,546</div>
<div class="t" style="font-size:19.25px;color:#1a1a1a;font-weight:bold;letter-spacing:0.156px;left:1669.78px;top:829.50px;line-height:25px;">0.00%</div>
<div class="b" style="left:285px;top:891.4px;width:1909px;height:32.8px;background:#dce6f1;"></div>
<div class="t" style="font-size:19.25px;color:#1a1a1a;font-weight:bold;letter-spacing:0.450px;left:327.83px;top:895.50px;line-height:25px;">60002</div>
<div class="t" style="font-size:19.25px;color:#1a1a1a;font-weight:bold;transform:scaleX(0.9519);transform-origin:left center;left:532.00px;top:895.50px;line-height:25px;">Licenses and Registrations</div>
<div class="t" style="font-size:19.25px;color:#1a1a1a;font-weight:bold;letter-spacing:0.583px;left:918.97px;top:895.50px;line-height:25px;">119,350</div>
<div class="t" style="font-size:19.25px;color:#1a1a1a;font-weight:bold;letter-spacing:0.206px;left:1041.67px;top:895.50px;line-height:25px;">10.00%</div>
<div class="t" style="font-size:19.25px;color:#1a1a1a;font-weight:bold;letter-spacing:0.431px;left:1164.82px;top:895.50px;line-height:25px;">131,285</div>
<div class="t" style="font-size:19.25px;color:#1a1a1a;font-weight:bold;letter-spacing:0.156px;left:1299.78px;top:895.50px;line-height:25px;">0.00%</div>
<div class="t" style="font-size:19.25px;color:#1a1a1a;font-weight:bold;left:1451.28px;top:895.50px;line-height:25px;">0</div>
<div class="t" style="font-size:19.25px;color:#1a1a1a;font-weight:bold;letter-spacing:0.431px;left:1523.82px;top:895.50px;line-height:25px;">131,285</div>
<div class="t" style="font-size:19.25px;color:#1a1a1a;font-weight:bold;letter-spacing:0.156px;left:1669.78px;top:895.50px;line-height:25px;">0.00%</div>
<div class="b" style="left:1245px;top:924px;width:113px;height:126px;background:#ffffb8;box-sizing:border-box;border:1px solid #c3d6e6;"></div>
<div class="b" style="left:1358px;top:924px;width:113px;height:126px;background:#ffffb8;box-sizing:border-box;border:1px solid #c3d6e6;"></div>
<div class="b" style="left:1745px;top:924px;width:449px;height:126px;background:#ffffb8;box-sizing:border-box;border:1px solid #c3d6e6;"></div>
<div class="b" style="left:1245px;top:955.5px;width:226px;height:1px;background:#c3d6e6;"></div>
<div class="b" style="left:1745px;top:955.5px;width:449px;height:1px;background:#c3d6e6;"></div>
<div class="b" style="left:1245px;top:987.0px;width:226px;height:1px;background:#c3d6e6;"></div>
<div class="b" style="left:1745px;top:987.0px;width:449px;height:1px;background:#c3d6e6;"></div>
<div class="b" style="left:1245px;top:1018.5px;width:226px;height:1px;background:#c3d6e6;"></div>
<div class="b" style="left:1745px;top:1018.5px;width:449px;height:1px;background:#c3d6e6;"></div>
<div class="t" style="font-size:19.25px;color:#444;left:472.14px;top:927.00px;line-height:25px;">1</div>
<div class="t" style="font-size:19.25px;color:#444;letter-spacing:0.139px;left:532.00px;top:927.00px;line-height:25px;">General State Fund</div>
<div class="t" style="font-size:19.25px;color:#444;letter-spacing:0.609px;left:919.19px;top:927.00px;line-height:25px;">119,350</div>
<div class="t" style="font-size:19.25px;color:#444;letter-spacing:0.102px;left:1042.20px;top:927.00px;line-height:25px;">10.00%</div>
<div class="t" style="font-size:19.25px;color:#444;letter-spacing:0.404px;left:1164.98px;top:927.00px;line-height:25px;">131,285</div>
<div class="t" style="font-size:19.25px;color:#444;letter-spacing:0.404px;left:1523.98px;top:927.00px;line-height:25px;">131,285</div>
<div class="t" style="font-size:19.25px;color:#444;letter-spacing:0.102px;left:1659.20px;top:927.00px;line-height:25px;">10.00%</div>
<div class="t" style="font-size:19.25px;color:#444;left:472.14px;top:958.50px;line-height:25px;">2</div>
<div class="t" style="font-size:19.25px;color:#444;letter-spacing:-0.040px;left:532.00px;top:958.50px;line-height:25px;">General Fees Fund</div>
<div class="t" style="font-size:19.25px;color:#444;left:1226.28px;top:958.50px;line-height:25px;">0</div>
<div class="t" style="font-size:19.25px;color:#444;left:1585.28px;top:958.50px;line-height:25px;">0</div>
<div class="t" style="font-size:19.25px;color:#444;left:472.14px;top:990.00px;line-height:25px;">3</div>
<div class="t" style="font-size:19.25px;color:#444;letter-spacing:0.015px;left:532.00px;top:990.00px;line-height:25px;">Research Funding</div>
<div class="t" style="font-size:19.25px;color:#444;left:1226.28px;top:990.00px;line-height:25px;">0</div>
<div class="t" style="font-size:19.25px;color:#444;letter-spacing:0.031px;left:1300.28px;top:990.00px;line-height:25px;">3.00%</div>
<div class="t" style="font-size:19.25px;color:#444;left:1585.28px;top:990.00px;line-height:25px;">0</div>
<div class="t" style="font-size:19.25px;color:#444;left:472.14px;top:1021.50px;line-height:25px;">4</div>
<div class="t" style="font-size:19.25px;color:#444;letter-spacing:0.339px;left:532.00px;top:1021.50px;line-height:25px;">Work Study Program</div>
<div class="t" style="font-size:19.25px;color:#444;left:1226.28px;top:1021.50px;line-height:25px;">0</div>
<div class="t" style="font-size:19.25px;color:#444;left:1585.28px;top:1021.50px;line-height:25px;">0</div>
<div class="b" style="left:285px;top:1081.4px;width:1909px;height:32.8px;background:#dce6f1;"></div>
<div class="t" style="font-size:19.25px;color:#1a1a1a;font-weight:bold;letter-spacing:0.450px;left:327.83px;top:1085.50px;line-height:25px;">60010</div>
<div class="t" style="font-size:19.25px;color:#1a1a1a;font-weight:bold;letter-spacing:-0.300px;left:532.00px;top:1085.50px;line-height:25px;">Other Expenses</div>
<div class="t" style="font-size:19.25px;color:#1a1a1a;font-weight:bold;letter-spacing:0.431px;left:918.82px;top:1085.50px;line-height:25px;">357,338</div>
<div class="t" style="font-size:19.25px;color:#1a1a1a;font-weight:bold;letter-spacing:0.156px;left:1052.78px;top:1085.50px;line-height:25px;">2.00%</div>
<div class="t" style="font-size:19.25px;color:#1a1a1a;font-weight:bold;letter-spacing:0.431px;left:1164.82px;top:1085.50px;line-height:25px;">364,485</div>
<div class="t" style="font-size:19.25px;color:#1a1a1a;font-weight:bold;letter-spacing:0.156px;left:1299.78px;top:1085.50px;line-height:25px;">0.00%</div>
<div class="t" style="font-size:19.25px;color:#1a1a1a;font-weight:bold;letter-spacing:0.422px;left:1412.12px;top:1085.50px;line-height:25px;">1,000</div>
<div class="t" style="font-size:19.25px;color:#1a1a1a;font-weight:bold;letter-spacing:0.431px;left:1523.82px;top:1085.50px;line-height:25px;">365,485</div>
<div class="t" style="font-size:19.25px;color:#1a1a1a;font-weight:bold;letter-spacing:0.156px;left:1669.78px;top:1085.50px;line-height:25px;">0.27%</div>
<div class="b" style="left:1245px;top:1114px;width:113px;height:126px;background:#ffffb8;box-sizing:border-box;border:1px solid #c3d6e6;"></div>
<div class="b" style="left:1358px;top:1114px;width:113px;height:126px;background:#ffffb8;box-sizing:border-box;border:1px solid #c3d6e6;"></div>
<div class="b" style="left:1745px;top:1114px;width:449px;height:126px;background:#ffffb8;box-sizing:border-box;border:1px solid #c3d6e6;"></div>
<div class="b" style="left:1245px;top:1145.5px;width:226px;height:1px;background:#c3d6e6;"></div>
<div class="b" style="left:1745px;top:1145.5px;width:449px;height:1px;background:#c3d6e6;"></div>
<div class="b" style="left:1245px;top:1177.0px;width:226px;height:1px;background:#c3d6e6;"></div>
<div class="b" style="left:1745px;top:1177.0px;width:449px;height:1px;background:#c3d6e6;"></div>
<div class="b" style="left:1245px;top:1208.5px;width:226px;height:1px;background:#c3d6e6;"></div>
<div class="b" style="left:1745px;top:1208.5px;width:449px;height:1px;background:#c3d6e6;"></div>
<div class="t" style="font-size:19.25px;color:#444;left:472.14px;top:1117.50px;line-height:25px;">1</div>
<div class="t" style="font-size:19.25px;color:#444;letter-spacing:0.139px;left:532.00px;top:1117.50px;line-height:25px;">General State Fund</div>
<div class="t" style="font-size:19.25px;color:#444;letter-spacing:0.404px;left:918.98px;top:1117.50px;line-height:25px;">357,338</div>
<div class="t" style="font-size:19.25px;color:#444;letter-spacing:0.031px;left:1053.28px;top:1117.50px;line-height:25px;">2.00%</div>
<div class="t" style="font-size:19.25px;color:#444;letter-spacing:0.404px;left:1164.98px;top:1117.50px;line-height:25px;">364,485</div>
<div class="t" style="font-size:19.25px;color:#444;letter-spacing:0.384px;left:1412.28px;top:1117.50px;line-height:25px;">1,000</div>
<div class="t" style="font-size:19.25px;color:#444;letter-spacing:0.404px;left:1523.98px;top:1117.50px;line-height:25px;">365,485</div>
<div class="t" style="font-size:19.25px;color:#444;letter-spacing:0.031px;left:1670.28px;top:1117.50px;line-height:25px;">2.28%</div>
<div class="t" style="font-size:19.25px;color:#444;left:472.14px;top:1149.00px;line-height:25px;">2</div>
<div class="t" style="font-size:19.25px;color:#444;letter-spacing:-0.040px;left:532.00px;top:1149.00px;line-height:25px;">General Fees Fund</div>
<div class="t" style="font-size:19.25px;color:#444;left:1226.28px;top:1149.00px;line-height:25px;">0</div>
<div class="t" style="font-size:19.25px;color:#444;left:1585.28px;top:1149.00px;line-height:25px;">0</div>
<div class="t" style="font-size:19.25px;color:#444;left:472.14px;top:1180.50px;line-height:25px;">3</div>
<div class="t" style="font-size:19.25px;color:#444;letter-spacing:0.015px;left:532.00px;top:1180.50px;line-height:25px;">Research Funding</div>
<div class="t" style="font-size:19.25px;color:#444;left:1226.28px;top:1180.50px;line-height:25px;">0</div>
<div class="t" style="font-size:19.25px;color:#444;left:1585.28px;top:1180.50px;line-height:25px;">0</div>
<div class="t" style="font-size:19.25px;color:#444;left:472.14px;top:1212.00px;line-height:25px;">4</div>
<div class="t" style="font-size:19.25px;color:#444;letter-spacing:0.339px;left:532.00px;top:1212.00px;line-height:25px;">Work Study Program</div>
<div class="t" style="font-size:19.25px;color:#444;left:1226.28px;top:1212.00px;line-height:25px;">0</div>
<div class="t" style="font-size:19.25px;color:#444;left:1585.28px;top:1212.00px;line-height:25px;">0</div>
<div class="b" style="left:867px;top:1251px;width:1327px;height:2px;background:#222;"></div>
<div class="t" style="font-size:19.25px;color:#1a1a1a;font-weight:bold;letter-spacing:-0.049px;left:532.00px;top:1255.50px;line-height:25px;">Total Other Operating Expenditures</div>
<div class="t" style="font-size:19.25px;color:#1a1a1a;font-weight:bold;letter-spacing:0.422px;left:901.98px;top:1255.50px;line-height:25px;">1,276,237</div>
<div class="t" style="font-size:19.25px;color:#1a1a1a;font-weight:bold;letter-spacing:0.583px;left:1164.97px;top:1255.50px;line-height:25px;">114,015</div>
<div class="t" style="font-size:19.25px;color:#1a1a1a;font-weight:bold;letter-spacing:0.583px;left:1523.97px;top:1255.50px;line-height:25px;">114,015</div>
<div class="t" style="font-size:19.25px;color:#1a1a1a;font-weight:bold;letter-spacing:0.223px;left:1651.96px;top:1255.50px;line-height:25px;">-91.07%</div>
<div class="b" style="left:90px;top:7px;width:2462px;height:53px;background:#fff;box-shadow:0 2px 9px rgba(0,0,0,.22);"></div>
<div class="b" style="left:109px;top:23.2px;width:15.5px;height:2.4px;background:#1c1c1c;"></div>
<div class="b" style="left:109px;top:27.7px;width:15.5px;height:2.4px;background:#1c1c1c;"></div>
<div class="b" style="left:109px;top:32.2px;width:15.5px;height:2.4px;background:#1c1c1c;"></div>
<div class="t" style="font-size:24.5px;color:#868686;letter-spacing:0.460px;left:159.50px;top:15.00px;line-height:32px;">Budgeting</div>
<div class="t" style="font-size:22px;color:#2f7fc7;left:292.50px;top:17.50px;line-height:29px;">&gt;</div>
<div class="t" style="font-size:24.5px;color:#868686;letter-spacing:-0.062px;left:322.50px;top:15.00px;line-height:32px;">UNIV10 - Other Operating Expenses Budget Request by Fund</div>
<div class="t" style="font-size:19.5px;color:#868686;letter-spacing:-0.055px;left:1876.50px;top:17.00px;line-height:25px;">Notifications</div>
<div class="t" style="font-size:19.5px;color:#868686;transform:scaleX(0.9458);transform-origin:left center;left:2066.50px;top:17.00px;line-height:25px;">Feedback</div>
<div class="t" style="font-size:19.5px;color:#868686;transform:scaleX(0.9349);transform-origin:left center;left:2210.50px;top:17.00px;line-height:25px;">Help</div>
<div class="b" style="left:2278.5px;top:16px;width:1.5px;height:28px;background:#8a8a8a;"></div>
<div class="t" style="font-size:21.5px;color:#7a7a7a;letter-spacing:0.191px;left:2366.50px;top:4.40px;line-height:28px;">Nils Rasmussen</div>
<div class="t" style="font-size:16px;color:#c2c2c2;transform:scaleX(0.9444);transform-origin:left center;left:2366.00px;top:32.80px;line-height:21px;font-variant:small-caps;">06_Higher_Ed_Demo</div>
<svg style="left:0;top:0" width="2560" height="160" viewBox="0 0 2560 160"><path d="M1856.5 16.8 Q1858.3 16.8 1858.3 18.6 Q1863 20.2 1863.2 26.5 Q1863.2 32.5 1866 35 V36 H1847 V35 Q1849.8 32.5 1849.8 26.5 Q1850 20.2 1854.7 18.6 Q1854.7 16.8 1856.5 16.8Z" fill="#111"/><path d="M1854.2 37.2 H1858.8 Q1858.6 39.2 1856.5 39.2 Q1854.4 39.2 1854.2 37.2Z" fill="#111"/><path d="M1852.6 31.5 Q1853.2 24 1855.6 21.2" fill="none" stroke="#fff" stroke-width="0.9"/><path d="M1990.4 30.2 L1995.6 35.4 L2000.8 30.2" fill="none" stroke="#b5b5b5" stroke-width="2.6"/><circle cx="2047.2" cy="27.9" r="10.2" fill="none" stroke="#111" stroke-width="2.2"/><circle cx="2043.4" cy="24.6" r="1.6" fill="#111"/><circle cx="2051" cy="24.6" r="1.6" fill="#111"/><path d="M2041.2 30.6 Q2047.2 37.4 2053.2 30.6" fill="none" stroke="#111" stroke-width="1.8"/><circle cx="2190.7" cy="27.9" r="10.1" fill="none" stroke="#111" stroke-width="2.3"/><path d="M2187.2 25.2 Q2187.4 21.6 2190.8 21.6 Q2194.2 21.6 2194.2 24.6 Q2194.2 26.4 2192.4 27.6 Q2190.7 28.8 2190.7 30.6" fill="none" stroke="#111" stroke-width="2.5"/><circle cx="2190.7" cy="33.6" r="1.5" fill="#111"/><path d="M2537.6 30.4 L2543.6 36.4 L2551 29" fill="none" stroke="#aaa" stroke-width="2.6"/><defs><clipPath id="av"><circle cx="2334" cy="29.6" r="23.8"/></clipPath><linearGradient id="sk" x1="0" y1="0" x2="1" y2="0"><stop offset="0" stop-color="#f1c6b2"/><stop offset=".45" stop-color="#e6ad95"/><stop offset=".62" stop-color="#cf957b"/><stop offset="1" stop-color="#b27a63"/></linearGradient><filter id="bl" filterUnits="userSpaceOnUse" x="2300" y="0" width="70" height="64"><feGaussianBlur stdDeviation="0.8"/></filter></defs><g clip-path="url(#av)"><rect x="2309" y="4" width="50" height="52" fill="#8f98a7"/><g filter="url(#bl)"><path d="M2339 5 L2349 10 Q2354 20 2353 30 L2349.5 37 L2345.5 31 V12Z" fill="#4e413b"/><path d="M2316.5 16 Q2318 8 2324 5 L2327 9 Q2321 11 2320 18Z" fill="#574234"/><path d="M2342 40 L2353 45 L2348 54 L2336 55Z" fill="#2b282c"/><path d="M2321 6 H2344 Q2347 16 2346.4 29 Q2346.4 40 2340.5 50 Q2334 55 2326 53.5 Q2319.6 44 2319.6 32 Q2319 16 2321 6Z" fill="url(#sk)"/><path d="M2322 14 Q2326 9 2333 11 Q2328 16 2323 20Z" fill="#f6d6c6" opacity=".7"/><ellipse cx="2327" cy="23" rx="2.6" ry="1.3" fill="#6d4b3d" opacity=".85"/><ellipse cx="2340.6" cy="23.8" rx="2.6" ry="1.3" fill="#5f4033" opacity=".85"/><path d="M2334.5 24 L2336 33.5 L2333 34" fill="none" stroke="#8d5a44" stroke-width="1.6" opacity=".7"/><path d="M2325.6 36.6 Q2332 39.6 2339.4 35.8" fill="none" stroke="#a9614f" stroke-width="1.5"/><ellipse cx="2332.4" cy="40" rx="3.6" ry="1.5" fill="#e79a96" opacity=".9"/><path d="M2346 22 Q2349.5 24 2348.5 32 L2346 34Z" fill="#c99a88"/></g></g><g transform="translate(-2.1 2.2) rotate(45 2047.5 88)"><rect x="2044.6" y="73.6" width="5.8" height="19.6" fill="none" stroke="#d4d4d4" stroke-width="1.5"/><path d="M2044.6 93.2 L2047.5 99.8 L2050.4 93.2Z" fill="#d4d4d4"/><rect x="2044.6" y="73.6" width="5.8" height="3.6" fill="#d4d4d4"/><path d="M2047.5 77.2 V93.2" stroke="#e2e2e2" stroke-width="1.4"/></g><path d="M2106.6 78.6 H2119.6 L2124.6 83.6 V97.7 H2106.6Z" fill="none" stroke="#111" stroke-width="2.1"/><path d="M2119.2 78.6 V84 H2124.6" fill="none" stroke="#111" stroke-width="1.4"/><circle cx="2106.6" cy="78.4" r="2.6" fill="#111"/><path d="M2107.6 79.6 L2111.2 83.2" stroke="#111" stroke-width="1.6"/><path d="M2191 80.6 V78.8 Q2191 78 2191.8 78 H2196.4 Q2197.2 78 2197.2 78.8 V80.6 H2201.2 Q2202 80.6 2202 81.4 V83.6 H2186.2 V81.4 Q2186.2 80.6 2187 80.6Z M2192.4 80.6 H2195.8 V79.4 H2192.4Z" fill="#111" fill-rule="evenodd"/><path d="M2187.4 84.6 H2200.8 V97.4 Q2200.8 99 2199.2 99 H2189 Q2187.4 99 2187.4 97.4Z" fill="#111"/><rect x="2190.2" y="86.2" width="1.4" height="10.6" fill="#fff"/><rect x="2193.5" y="86.2" width="1.4" height="10.6" fill="#fff"/><rect x="2196.8" y="86.2" width="1.4" height="10.6" fill="#fff"/><rect x="2298.3" y="77.9" width="17.6" height="19.8" fill="none" stroke="#111" stroke-width="2.1"/><rect x="2300.6" y="80.6" width="12.6" height="1.9" fill="#111"/><path d="M2301.6 87.4 L2308.4 95 M2308.4 87.4 L2301.6 95" stroke="#111" stroke-width="2.7"/><rect x="2309.6" y="91" width="3.4" height="3.8" fill="#777"/><path d="M2416.6 90.6 A9.3 9.3 0 1 1 2419.4 94.8" fill="none" stroke="#111" stroke-width="2.7"/><path d="M2411 86.8 L2420.2 86 L2416.2 93.6Z" fill="#111"/><path d="M2422.6 82.6 L2425.6 88 L2429.2 85.6" fill="none" stroke="#111" stroke-width="1.5"/><path d="M2491.6 80 L2507.4 95.6 M2507.4 80 L2491.6 95.6" stroke="#111" stroke-width="4.6"/></svg>
</div></div></div>
</body></html>
